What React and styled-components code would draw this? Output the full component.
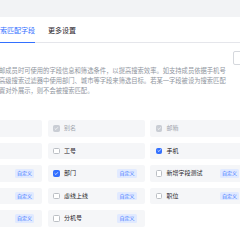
import React from "react";
import styled, { createGlobalStyle } from "styled-components";

const GlobalStyle = createGlobalStyle`
  html, body {
    margin: 0;
    padding: 0;
    background: #fff;
    overflow: hidden;
  }
  body {
    font-family: "Noto Sans CJK SC", "Noto Sans", sans-serif;
  }
`;

const Page = styled.div`
  width: 240px;
  height: 240px;
  overflow: hidden;
  background: #fff;
`;

const TopBand = styled.div`
  height: 17px;
  background: #f2f3f5;
`;

const TabBar = styled.div`
  display: flex;
  gap: 13px;
  height: 25px;
  margin-left: -7px;
  border-bottom: 1px solid #e5e6eb;
`;

const Tab = styled.div`
  display: flex;
  align-items: center;
  padding-top: 1px;
  font-size: 7px;
  line-height: 8px;
  color: ${(p) => (p.active ? "#3370ff" : "#1f2329")};
  border-bottom: 1px solid ${(p) => (p.active ? "#3370ff" : "transparent")};
  margin-bottom: -1px;
  white-space: nowrap;
`;

const ButtonRow = styled.div`
  display: flex;
  justify-content: flex-end;
  margin-top: 8px;
  margin-right: -40px;
`;

const GhostButton = styled.div`
  width: 47px;
  height: 14px;
  box-sizing: border-box;
  border: 1px solid #d5d8dd;
  border-radius: 2px;
  font-size: 6px;
  line-height: 12px;
  padding-left: 9px;
  color: #1f2329;
  white-space: nowrap;
  overflow: hidden;
`;

const Description = styled.div`
  margin-top: 1px;
  margin-left: -1px;
  font-size: 6.3px;
  line-height: 10px;
  color: #8f959e;
  white-space: nowrap;
`;

const Line = styled.div``;

const Grid = styled.div`
  display: grid;
  grid-template-columns: repeat(3, 97px);
  column-gap: 5.5px;
  row-gap: 6px;
  margin-top: 24px;
  margin-left: -55px;
`;

const Card = styled.div`
  display: flex;
  align-items: center;
  height: 16.5px;
  padding: 0 8px 0 5.5px;
  background: #f5f6f8;
  border-radius: 2px;
`;

const Box = styled.span`
  display: inline-flex;
  align-items: center;
  justify-content: center;
  width: 6.5px;
  height: 6.5px;
  box-sizing: border-box;
  border-radius: 1.5px;
  border: 0.8px solid
    ${(p) => (p.state === "on" ? "#3370ff" : p.state === "locked" ? "#c9cdd4" : "#bbbfc4")};
  background: ${(p) =>
    p.state === "on" ? "#3370ff" : p.state === "locked" ? "#c9cdd4" : "#fff"};
  flex-shrink: 0;
`;

const Label = styled.span`
  margin-left: 4.5px;
  font-size: 6px;
  line-height: 8px;
  color: ${(p) => (p.locked ? "#a2a7af" : "#1f2329")};
  white-space: nowrap;
`;

const Tag = styled.span`
  margin-left: auto;
  height: 8.5px;
  padding: 0 2px;
  border-radius: 1.5px;
  background: #e1eaff;
  color: #3370ff;
  font-size: 5px;
  line-height: 8.5px;
  white-space: nowrap;
`;

function Check({ state }) {
  return (
    <Box state={state}>
      {state !== "off" && (
        <svg width="5" height="5" viewBox="0 0 10 10">
          <path
            d="M2 5.2 L4.2 7.3 L8 3"
            fill="none"
            stroke="#fff"
            strokeWidth="1.6"
            strokeLinecap="round"
            strokeLinejoin="round"
          />
        </svg>
      )}
    </Box>
  );
}

const fields = [
  { label: "姓名", state: "locked" },
  { label: "别名", state: "locked" },
  { label: "邮箱", state: "locked" },
  { label: "账号", state: "on" },
  { label: "工号", state: "off" },
  { label: "手机", state: "on" },
  { label: "城市", state: "off", custom: true },
  { label: "部门", state: "on", custom: true },
  { label: "新增字段测试", state: "off", custom: true },
  { label: "座机", state: "off", custom: true },
  { label: "虚线上线", state: "off", custom: true },
  { label: "职位", state: "off", custom: true },
  { label: "地址", state: "off", custom: true },
  { label: "分机号", state: "off", custom: true },
];

export default function App() {
  return (
    <Page>
      <GlobalStyle />
      <TopBand />
      <TabBar>
        <Tab active>搜索匹配字段</Tab>
        <Tab>更多设置</Tab>
      </TabBar>
      <ButtonRow>
        <GhostButton>恢复默认</GhostButton>
      </ButtonRow>
      <Description>
        <Line>邮成员时可使用的字段信息和筛选条件，以提高搜索效率。如支持成员依据手机号</Line>
        <Line>高级搜索过滤器中使用部门、城市等字段来筛选目标。若某一字段被设为搜索匹配</Line>
        <Line>置对外展示，则不会被搜索匹配。</Line>
      </Description>
      <Grid>
        {fields.map((f) => (
          <Card key={f.label}>
            <Check state={f.state} />
            <Label locked={f.state === "locked"}>{f.label}</Label>
            {f.custom && <Tag>自定义</Tag>}
          </Card>
        ))}
      </Grid>
    </Page>
  );
}
